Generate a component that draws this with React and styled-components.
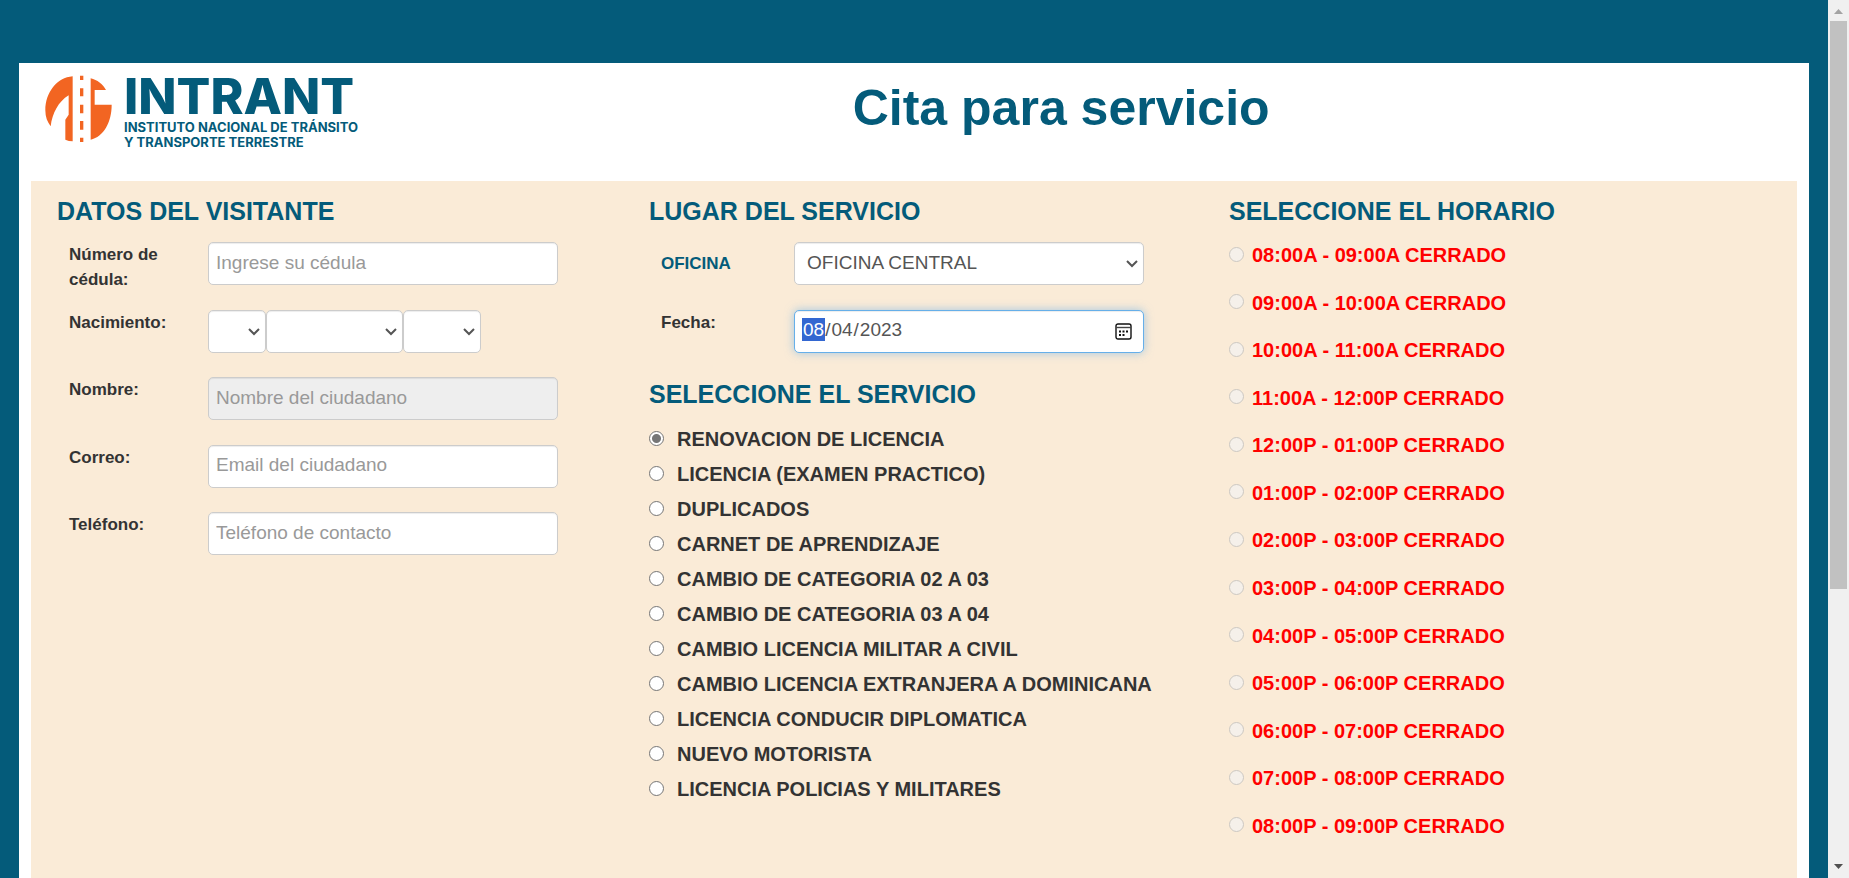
import React from "react";
import styled, { createGlobalStyle } from "styled-components";

const TEAL = "#045b7a";
const CREAM = "#faebd7";

const GlobalStyle = createGlobalStyle`
  *, *::before, *::after { box-sizing: border-box; }
  body {
    margin: 0;
    background: ${TEAL};
    color: #333;
    font-family: "Liberation Sans", Arial, sans-serif;
    font-size: 17px;
    line-height: 25px;
  }
  h1, h2 { margin: 0; color: ${TEAL}; font-weight: 700; }
  input, select { font-family: inherit; margin: 0; }
`;

const Window = styled.div`
  display: flex;
  height: 100vh;
  overflow: hidden;
`;

const Page = styled.div`
  flex: 1;
  min-width: 0;
  overflow-y: auto;
  scrollbar-width: none;
  padding: 63px 19px 0;
`;

const Scrollbar = styled.div`
  display: flex;
  flex-direction: column;
  align-items: center;
  width: 21px;
  background: #f0f0f0;
`;

const ScrollEnd = styled.svg`
  flex: none;
  width: 21px;
  height: 21px;
  fill: ${(p) => p.$color};
`;

const ScrollTrack = styled.div`
  flex: 1;
  width: 17px;
`;

const ScrollThumb = styled.div`
  height: 68%;
  background: #c1c1c1;
`;

const Sheet = styled.main`
  background: #fff;
  padding: 0 12px;
`;

const Header = styled.header`
  display: grid;
  grid-template-columns: minmax(0, 1fr) minmax(0, 5fr);
  height: 118px;
  padding-top: 12px;
`;

const Brand = styled.div`
  display: flex;
  gap: 12px;
  padding-left: 14px;
  color: ${TEAL};
  font-family: Inter, sans-serif;
  white-space: nowrap;
`;

const BrandMark = styled.svg`
  flex: none;
  width: 67px;
  height: 69px;
`;

const BrandName = styled.div`
  margin-bottom: 3px;
  font-size: 50px;
  line-height: 42px;
  font-weight: 800;
`;

const BrandLine = styled.div`
  font-size: 13px;
  line-height: 15px;
  font-weight: 700;
`;

const Title = styled.h1`
  padding-top: 5px;
  font-size: 50px;
  line-height: 56px;
  text-align: center;
`;

const Form = styled.form`
  display: grid;
  grid-template-columns: 592fr 580fr 568fr;
  min-height: 100vh;
  padding: 16px 0 0 26px;
  background: ${CREAM};
`;

const Heading = styled.h2`
  margin-bottom: 17px;
  font-size: 25px;
  line-height: 28px;
`;

const ServiceHeading = styled(Heading)`
  margin: 27px 0 14px;
`;

const Fields = styled.div`
  display: flex;
  flex-direction: column;
  justify-content: space-between;
  height: ${(p) => p.$height}px;
  padding-left: 12px;
`;

const Row = styled.div`
  display: grid;
  grid-template-columns: ${(p) => p.$label}px 350px;
  height: 43px;
  align-items: ${(p) => (p.$centered ? "center" : "start")};
`;

const Label = styled.label`
  max-width: 110px;
  font-weight: 700;
  color: ${(p) => (p.$accent ? TEAL : "inherit")};
`;

const Input = styled.input`
  width: 100%;
  height: 43px;
  padding: 4px 7px 6px;
  border: 1px solid #ccc;
  border-radius: 5px;
  background: #fff;
  box-shadow: inset 0 1px 1px rgba(0, 0, 0, 0.075);
  color: #555;
  font-size: 19px;
  &::placeholder { color: #999; }
  &:disabled { background: #eee; }
`;

const DateInput = styled(Input)`
  padding-bottom: 8px;
  &:focus {
    outline: none;
    border-color: #66afe9;
    box-shadow: inset 0 1px 1px rgba(0, 0, 0, 0.075), 0 0 10px rgba(102, 175, 233, 0.6);
  }
  &::-webkit-datetime-edit-month-field:focus {
    background-color: #0078d7 !important;
    color: #fff !important;
  }
  &::-webkit-calendar-picker-indicator { opacity: 0; }
`;

const Control = styled.div`
  position: relative;
  width: ${(p) => (p.$width ? `${p.$width}px` : "100%")};
`;

const Select = styled.select`
  appearance: none;
  display: block;
  width: 100%;
  height: 43px;
  padding: 4px 24px 6px 12px;
  border: 1px solid #ccc;
  border-radius: 5px;
  background: #fff;
  box-shadow: inset 0 1px 1px rgba(0, 0, 0, 0.075);
  color: #555;
  font-size: 19px;
`;

const Chevron = styled.svg`
  position: absolute;
  top: 18px;
  right: 6px;
  width: 12px;
  height: 8px;
  fill: none;
  stroke: #555;
  stroke-width: 2;
  pointer-events: none;
`;

const CalendarIcon = styled.svg`
  position: absolute;
  top: 13px;
  right: 12px;
  width: 17px;
  height: 17px;
  pointer-events: none;
`;

const BirthDate = styled.div`
  display: flex;
`;

const Options = styled.div`
  display: flex;
  flex-direction: column;
`;

const Slots = styled.div`
  display: flex;
  flex-direction: column;
  justify-content: space-between;
  height: 597px;
  padding-top: 1px;
`;

const Choice = styled.label`
  display: flex;
  align-items: center;
  gap: ${(p) => (p.$closed ? 8 : 13)}px;
  height: ${(p) => (p.$closed ? 25 : 35)}px;
  color: ${(p) => (p.$closed ? "#f00" : "inherit")};
  font-size: 20px;
  font-weight: 700;
  white-space: nowrap;
`;

const Radio = styled.input`
  appearance: none;
  flex: none;
  width: 15px;
  height: 15px;
  margin-bottom: 3px;
  border: 1px solid #767676;
  border-radius: 50%;
  background: #fff;
  &:checked { background: radial-gradient(circle, #767676 4px, #fff 5px); }
  &:disabled { border-color: #ccc8c2; background: #f5f0ea; }
`;

const SERVICES = [
  "RENOVACION DE LICENCIA",
  "LICENCIA (EXAMEN PRACTICO)",
  "DUPLICADOS",
  "CARNET DE APRENDIZAJE",
  "CAMBIO DE CATEGORIA 02 A 03",
  "CAMBIO DE CATEGORIA 03 A 04",
  "CAMBIO LICENCIA MILITAR A CIVIL",
  "CAMBIO LICENCIA EXTRANJERA A DOMINICANA",
  "LICENCIA CONDUCIR DIPLOMATICA",
  "NUEVO MOTORISTA",
  "LICENCIA POLICIAS Y MILITARES",
];

const SLOTS = [
  "08:00A - 09:00A",
  "09:00A - 10:00A",
  "10:00A - 11:00A",
  "11:00A - 12:00P",
  "12:00P - 01:00P",
  "01:00P - 02:00P",
  "02:00P - 03:00P",
  "03:00P - 04:00P",
  "04:00P - 05:00P",
  "05:00P - 06:00P",
  "06:00P - 07:00P",
  "07:00P - 08:00P",
  "08:00P - 09:00P",
];

function Dropdown({ width, children, ...rest }) {
  return (
    <Control $width={width}>
      <Select {...rest}>{children}</Select>
      <Chevron viewBox="0 0 12 8" aria-hidden="true">
        <path d="M1 1l5 5 5-5" />
      </Chevron>
    </Control>
  );
}

function Logo() {
  return (
    <Brand>
      <BrandMark viewBox="134 76 201 207" aria-hidden="true">
        <g fill="#f26522">
          <path d="M217 80C170 84 135 128 135 182C135 202 141 217 151 230C156 190 174 156 205 137V195L195 210V270Q205 275 217 275Z" />
          <path d="M271 86C291 91 307 103 317 121H283V165H334C334 218 310 261 271 270Z" />
          <path d="M239 78h10v13h-10zM239 116h10v24h-10zM239 165h10v26h-10zM239 214h10v26h-10zM239 264h10v13h-10z" />
        </g>
      </BrandMark>
      <div>
        <BrandName>INTRANT</BrandName>
        <BrandLine>INSTITUTO NACIONAL DE TRÁNSITO</BrandLine>
        <BrandLine>Y TRANSPORTE TERRESTRE</BrandLine>
      </div>
    </Brand>
  );
}

function TextRow({ id, label, ...rest }) {
  return (
    <Row $label={139}>
      <Label htmlFor={id}>{label}</Label>
      <Input id={id} {...rest} />
    </Row>
  );
}

export default function App() {
  return (
    <>
      <GlobalStyle />
      <Window>
        <Page>
          <Sheet>
            <Header>
              <Logo />
              <Title>Cita para servicio</Title>
            </Header>
            <Form>
              <section>
                <Heading>DATOS DEL VISITANTE</Heading>
                <Fields $height={313}>
                  <TextRow id="cedula" label="Número de cédula:" placeholder="Ingrese su cédula" />
                  <Row $label={139}>
                    <Label htmlFor="dia">Nacimiento:</Label>
                    <BirthDate>
                      <Dropdown id="dia" width={58} aria-label="Día" />
                      <Dropdown width={137} aria-label="Mes" />
                      <Dropdown width={78} aria-label="Año" />
                    </BirthDate>
                  </Row>
                  <TextRow id="nombre" label="Nombre:" placeholder="Nombre del ciudadano" disabled />
                  <TextRow id="correo" label="Correo:" type="email" placeholder="Email del ciudadano" />
                  <TextRow id="telefono" label="Teléfono:" type="tel" placeholder="Teléfono de contacto" />
                </Fields>
              </section>
              <section>
                <Heading>LUGAR DEL SERVICIO</Heading>
                <Fields $height={111}>
                  <Row $label={133} $centered>
                    <Label htmlFor="oficina" $accent>OFICINA</Label>
                    <Dropdown id="oficina">
                      <option>OFICINA CENTRAL</option>
                    </Dropdown>
                  </Row>
                  <Row $label={133}>
                    <Label htmlFor="fecha">Fecha:</Label>
                    <Control>
                      <DateInput id="fecha" type="date" defaultValue="2023-08-04" autoFocus />
                      <CalendarIcon viewBox="0 0 17 17" aria-hidden="true">
                        <rect x="1" y="1" width="15" height="15" rx="2" fill="none" stroke="#111" strokeWidth="1.4" />
                        <path d="M1 4.500h15" stroke="#444" strokeWidth="1.4" />
                        <path d="M4 7.500h2v2h-2zM7.500 7.500h2v2h-2zM11 7.500h2v2h-2zM4 11h2v2h-2zM7.500 11h2v2h-2z" fill="#111" />
                      </CalendarIcon>
                    </Control>
                  </Row>
                </Fields>
                <ServiceHeading>SELECCIONE EL SERVICIO</ServiceHeading>
                <Options role="radiogroup" aria-label="Servicio">
                  {SERVICES.map((name, i) => (
                    <Choice key={name}>
                      <Radio type="radio" name="servicio" defaultChecked={i === 0} />
                      {name}
                    </Choice>
                  ))}
                </Options>
              </section>
              <section>
                <Heading>SELECCIONE EL HORARIO</Heading>
                <Slots role="radiogroup" aria-label="Horario">
                  {SLOTS.map((time) => (
                    <Choice key={time} $closed>
                      <Radio type="radio" name="horario" disabled />
                      {time} CERRADO
                    </Choice>
                  ))}
                </Slots>
              </section>
            </Form>
          </Sheet>
        </Page>
        <Scrollbar aria-hidden="true">
          <ScrollEnd $color="#a3a3a3" viewBox="0 0 21 21">
            <path d="M6 14L10.500 9L15 14Z" />
          </ScrollEnd>
          <ScrollTrack>
            <ScrollThumb />
          </ScrollTrack>
          <ScrollEnd $color="#505050" viewBox="0 0 21 21">
            <path d="M6 7L10.500 12L15 7Z" />
          </ScrollEnd>
        </Scrollbar>
      </Window>
    </>
  );
}
